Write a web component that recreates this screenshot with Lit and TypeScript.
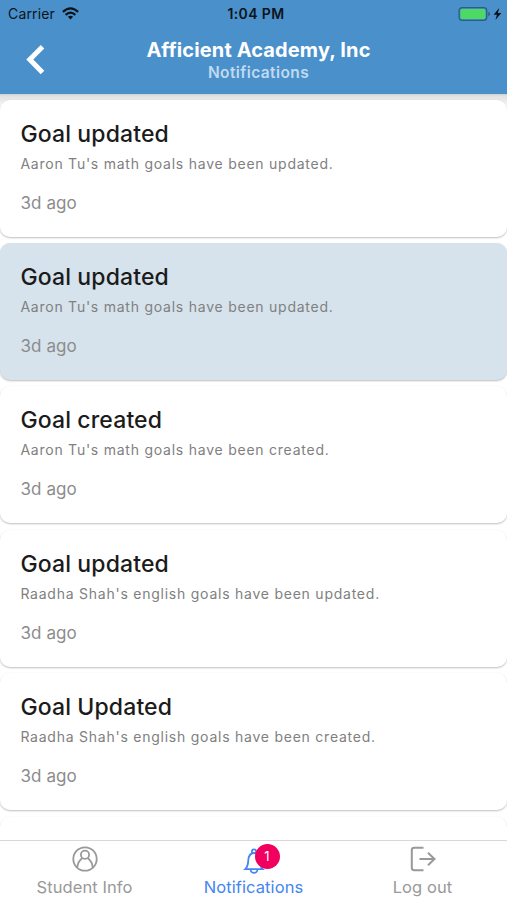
import { LitElement, html, css, svg } from "lit";
import { customElement, property } from "lit/decorators.js";

interface Notice {
  title: string;
  body: string;
  age: string;
  unread?: boolean;
}

const notices: Notice[] = [
  { title: "Goal updated", body: "Aaron Tu's math goals have been updated.", age: "3d ago" },
  { title: "Goal updated", body: "Aaron Tu's math goals have been updated.", age: "3d ago", unread: true },
  { title: "Goal created", body: "Aaron Tu's math goals have been created.", age: "3d ago" },
  { title: "Goal updated", body: "Raadha Shah's english goals have been updated.", age: "3d ago" },
  { title: "Goal Updated", body: "Raadha Shah's english goals have been created.", age: "3d ago" },
  { title: "", body: "", age: "" },
];

@customElement("status-bar")
class StatusBar extends LitElement {
  static styles = css`
    :host { display: grid; grid-template-columns: 1fr auto 1fr; align-items: center; height: 27px; color: #0b141c; }
    .carrier { display: flex; align-items: center; gap: 7px; padding-left: 8px; font-size: 14px; letter-spacing: 0.15px; }
    .time { font-size: 14px; font-weight: 600; letter-spacing: 0.4px; padding-left: 5px; }
    .power { display: flex; justify-content: flex-end; padding-right: 5px; }
    svg { display: block; }
  `;
  render() {
    return html`
      <div class="carrier"><span>Carrier</span>
        <svg width="17" height="13" viewBox="0 0 17 13" fill="none" stroke="#0b141c" stroke-width="2.2">
          <path d="M.9 4.9Q8.5-2 16.1 4.9" /><path d="M3.6 7.9Q8.5 3.5 13.4 7.9" />
          <path d="M8.5 12.4L5.9 9.8Q8.5 7.6 11.1 9.8Z" fill="#0b141c" stroke="none" />
        </svg>
      </div>
      <div class="time">1:04 PM</div>
      <div class="power">
        <svg width="44" height="14" viewBox="0 0 44 14">
          <rect x="1.1" y=".7" width="27.6" height="12.6" rx="3" fill="none" stroke="#2d5c86" stroke-width="1.3" />
          <rect x="2.4" y="2" width="25" height="10" rx="1.6" fill="#4cd964" />
          <path d="M30.3 4.7q1.7.5 1.7 2.3t-1.7 2.3z" fill="#2d5c86" />
          <path d="M41.2 1L35.6 7.7h3.3L37.4 13l5.9-7h-3.4z" fill="#07111a" />
        </svg>
      </div>`;
  }
}

@customElement("notice-card")
class NoticeCard extends LitElement {
  @property({ attribute: false }) notice!: Notice;
  static styles = css`
    :host { display: block; flex: none; }
    .card { box-sizing: border-box; height: 137px; padding: 19px 20.4px 0; border-radius: 10px; background: #fff; box-shadow: 0 1px 2px rgba(0, 0, 0, 0.26); }
    .unread { background: #d6e3ec; }
    .title { font-size: 23px; line-height: 30px; font-weight: 500; color: #1b1b1b; letter-spacing: 0.13px; }
    .body { font-size: 14px; line-height: 20px; margin-top: 5px; color: #808080; letter-spacing: 0.76px; }
    .age { font-size: 17px; line-height: 24px; margin-top: 17px; color: #8c8c8c; letter-spacing: 0.1px; }
    div { white-space: nowrap; }
  `;
  render() {
    const n = this.notice;
    return html`<div class="card ${n.unread ? "unread" : ""}">
      <div class="title">${n.title}</div>
      <div class="body">${n.body}</div>
      <div class="age">${n.age}</div>
    </div>`;
  }
}

const icons = {
  person: svg`<circle cx="13" cy="13" r="11.7" /><circle cx="13" cy="8.8" r="4.1" /><path d="M5.2 21.6C5.8 16 8.3 13.6 10.4 12M20.8 21.6C20.2 16 17.7 13.6 15.6 12" />`,
  bell: svg`<path d="M4.3 23.2h17.4c-1.9-1.8-2.7-4.2-3-8.8C18.4 9.4 16.8 7 13 7s-5.4 2.4-5.7 7.4c-.3 4.6-1.1 7-3 8.8zM10.9 7.2V5.5a2.1 2.1 0 0 1 4.2 0V7.2M9.6 23.5a3.4 3.4 0 0 0 6.8 0" />`,
  exit: svg`<path d="M13.5 1.8H4.2Q1.8 1.8 1.8 4.2v17.6q0 2.4 2.4 2.4h9.3M9.5 13h15M18 6.8l6.5 6.2L18 19.2" stroke-width="2" />`,
};

@customElement("tab-bar")
class TabBar extends LitElement {
  static styles = css`
    :host { display: grid; grid-template-columns: repeat(3, 1fr); flex: none; box-sizing: border-box; height: 60px; border-top: 1px solid #d8d8d8; background: #fff; }
    .tab { display: flex; flex-direction: column; align-items: center; padding-top: 5px; color: #999; }
    .active { color: #4586ef; }
    .icon { position: relative; height: 26px; }
    .icon svg { display: block; overflow: visible; fill: none; stroke: currentColor; stroke-width: 1.8; }
    .label { font-size: 16.5px; line-height: 22px; margin-top: 4.4px; white-space: nowrap; letter-spacing: 0.09px; }
    .badge { position: absolute; left: 14px; top: -2px; width: 25px; height: 25px; border-radius: 50%; background: #f2005f; color: #fff; font-size: 13px; line-height: 25px; text-align: center; }
  `;
  render() {
    return html`
      <div class="tab"><div class="icon"><svg width="26" height="26">${icons.person}</svg></div><div class="label">Student Info</div></div>
      <div class="tab active"><div class="icon"><svg width="26" height="26">${icons.bell}</svg><span class="badge">1</span></div><div class="label">Notifications</div></div>
      <div class="tab"><div class="icon"><svg width="26" height="26">${icons.exit}</svg></div><div class="label">Log out</div></div>`;
  }
}

@customElement("app-root")
class AppRoot extends LitElement {
  static styles = css`
    :host { display: flex; flex-direction: column; height: 900px; overflow: hidden; background: #fff; font-family: Inter, "Liberation Sans", sans-serif; }
    .top { flex: none; height: 94px; background: #4a90ca; }
    .nav { display: grid; grid-template-columns: 60px 1fr 60px; height: 67px; }
    .back { display: block; margin: 17px 0 0 25px; }
    .heading { text-align: center; padding: 10px 0 0 10px; white-space: nowrap; }
    .school { font-size: 20px; line-height: 26px; font-weight: 700; color: #fff; letter-spacing: 0.12px; }
    .page { font-size: 15.5px; line-height: 19px; font-weight: 600; color: #c0dbf1; letter-spacing: 0.4px; }
    .list { flex: 1; min-height: 0; overflow: hidden; display: flex; flex-direction: column; gap: 6.4px; padding-top: 5.6px; background: linear-gradient(#cfcfcf, #e2e2e2 2px, #e9e9e9 6px, #fff 14px); }
  `;
  render() {
    return html`
      <div class="top">
        <status-bar></status-bar>
        <div class="nav">
          <svg class="back" width="22" height="32" viewBox="0 0 22 32" fill="none" stroke="#fff" stroke-width="5"><path d="M17.5 2.8L4.8 15.5l12.7 12.9" /></svg>
          <div class="heading"><div class="school">Afficient Academy, Inc</div><div class="page">Notifications</div></div>
        </div>
      </div>
      <div class="list">${notices.map((n) => html`<notice-card .notice=${n}></notice-card>`)}</div>
      <tab-bar></tab-bar>`;
  }
}
